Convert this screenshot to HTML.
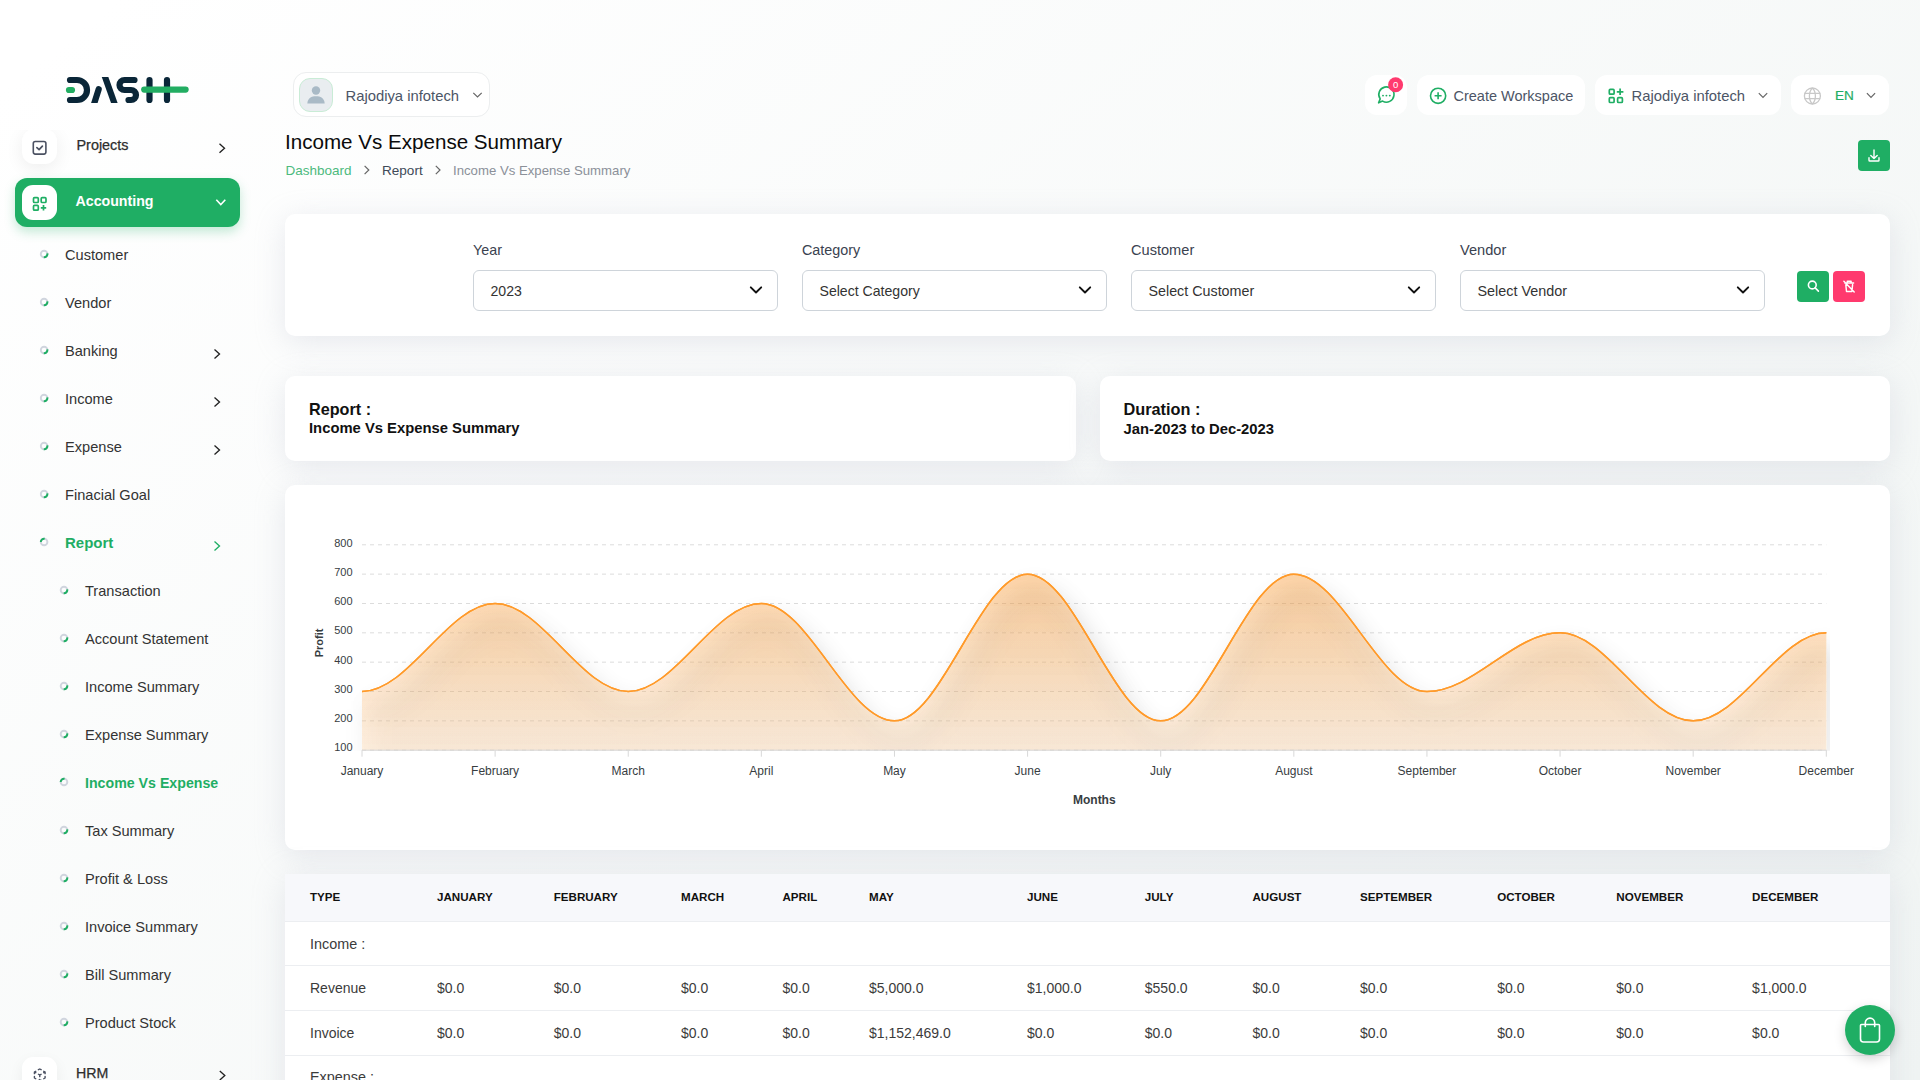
<!DOCTYPE html>
<html><head><meta charset="utf-8"><title>Income Vs Expense Summary</title>
<style>
*{box-sizing:border-box;margin:0;padding:0}
html,body{width:1920px;height:1080px;overflow:hidden}
body{position:relative;font-family:"Liberation Sans",sans-serif;color:#333;
background:linear-gradient(141.55deg,rgba(240,244,243,0) 3.46%,#f0f4f3 99.86%),#fff}
.a{position:absolute;white-space:nowrap;line-height:20px}
.card{position:absolute;background:#fff;border-radius:10px;box-shadow:0 6px 30px rgba(182,186,203,.3)}
.hb{position:absolute;top:75px;height:40px;background:#fff;border-radius:12px}
svg{position:absolute;overflow:visible}
#menu{position:absolute;left:0;top:130px;width:275px;height:950px;overflow:hidden}
.ib{position:absolute;width:35px;height:35px;border-radius:11px;background:#fff;box-shadow:0 5px 15px rgba(0,0,0,.06)}
</style></head>
<body>

<svg style="left:0;top:0" width="200" height="120" viewBox="0 0 200 120"><defs><clipPath id="lgc"><rect x="85" y="76.9" width="40" height="26"/></clipPath></defs>
 <g fill="none" stroke="#0a2638" stroke-width="6.2" stroke-linecap="round" stroke-linejoin="round">
  <path d="M70 80H77A10 10 0 0 1 77 100H70"/>
  <g clip-path="url(#lgc)" stroke-linecap="butt"><path d="M93.4 106L98.7 89.2" stroke-linecap="round"/><path d="M104 74L115.4 106"/></g>
  <path d="M134.5 80H124.5A5 5 0 0 0 124.5 90H131A5 5 0 0 1 131 100H128.5"/>
  <path d="M149.5 80V100M167 80V100"/>
 </g>
 <g fill="none" stroke="#22ad62" stroke-width="6.2" stroke-linecap="round">
  <path d="M69 90H72"/><path d="M144.2 89.6H185.6"/>
 </g>
</svg>

<div id="menu">
<div class="ib" style="left:22px;top:-1.3000000000000114px;border-radius:12px;box-shadow:0 4px 18px rgba(0,0,0,.07)"></div>
<div style="position:absolute;left:15px;top:48px;width:225px;height:49px;border-radius:12px;background:#1fae64;box-shadow:0 5px 11px rgba(31,174,100,.26)"></div>
<div class="ib" style="left:22px;top:55px;box-shadow:none"></div>
<div class="ib" style="left:22px;top:927px"></div>
<div class="a" style="left:76.5px;top:4.91px;font-size:14.4px;font-weight:400;color:#2d2d2d;-webkit-text-stroke:.25px #2d2d2d">Projects</div>
<div class="a" style="left:75.5px;top:61.08px;font-size:14.2px;font-weight:700;color:#fff;">Accounting</div>
<div class="a" style="left:76px;top:932.58px;font-size:14.2px;font-weight:400;color:#2d2d2d;-webkit-text-stroke:.25px #2d2d2d">HRM</div>
<div class="a" style="left:65px;top:114.74px;font-size:14.6px;font-weight:400;color:#333;">Customer</div>
<div class="a" style="left:65px;top:162.74px;font-size:14.6px;font-weight:400;color:#333;">Vendor</div>
<div class="a" style="left:65px;top:210.74px;font-size:14.6px;font-weight:400;color:#333;">Banking</div>
<div class="a" style="left:65px;top:258.74px;font-size:14.6px;font-weight:400;color:#333;">Income</div>
<div class="a" style="left:65px;top:306.74px;font-size:14.6px;font-weight:400;color:#333;">Expense</div>
<div class="a" style="left:65px;top:354.74px;font-size:14.6px;font-weight:400;color:#333;">Finacial Goal</div>
<div class="a" style="left:65px;top:402.60px;font-size:15px;font-weight:700;color:#1fae64;">Report</div>
<div class="a" style="left:85px;top:450.74px;font-size:14.6px;font-weight:400;color:#333;">Transaction</div>
<div class="a" style="left:85px;top:498.74px;font-size:14.6px;font-weight:400;color:#333;">Account Statement</div>
<div class="a" style="left:85px;top:546.74px;font-size:14.6px;font-weight:400;color:#333;">Income Summary</div>
<div class="a" style="left:85px;top:594.74px;font-size:14.6px;font-weight:400;color:#333;">Expense Summary</div>
<div class="a" style="left:85px;top:642.88px;font-size:14.2px;font-weight:700;color:#1fae64;">Income Vs Expense</div>
<div class="a" style="left:85px;top:690.74px;font-size:14.6px;font-weight:400;color:#333;">Tax Summary</div>
<div class="a" style="left:85px;top:738.74px;font-size:14.6px;font-weight:400;color:#333;">Profit &amp; Loss</div>
<div class="a" style="left:85px;top:786.74px;font-size:14.6px;font-weight:400;color:#333;">Invoice Summary</div>
<div class="a" style="left:85px;top:834.74px;font-size:14.6px;font-weight:400;color:#333;">Bill Summary</div>
<div class="a" style="left:85px;top:882.74px;font-size:14.6px;font-weight:400;color:#333;">Product Stock</div>
<svg style="left:0;top:0" width="275" height="950" viewBox="0 130 275 950"><circle cx="44.1" cy="254" r="3.3" fill="none" stroke="#d0d5de" stroke-width="1.9"/><path d="M47.35 253.43A3.3 3.3 0 0 1 43.81 257.29" fill="none" stroke="#1fae64" stroke-width="2"/><circle cx="44.1" cy="302" r="3.3" fill="none" stroke="#d0d5de" stroke-width="1.9"/><path d="M47.35 301.43A3.3 3.3 0 0 1 43.81 305.29" fill="none" stroke="#1fae64" stroke-width="2"/><circle cx="44.1" cy="350" r="3.3" fill="none" stroke="#d0d5de" stroke-width="1.9"/><path d="M47.35 349.43A3.3 3.3 0 0 1 43.81 353.29" fill="none" stroke="#1fae64" stroke-width="2"/><path d="M214.5 349.5L219.5 354L214.5 358.5" fill="none" stroke="#222" stroke-width="1.35"/><circle cx="44.1" cy="398" r="3.3" fill="none" stroke="#d0d5de" stroke-width="1.9"/><path d="M47.35 397.43A3.3 3.3 0 0 1 43.81 401.29" fill="none" stroke="#1fae64" stroke-width="2"/><path d="M214.5 397.5L219.5 402L214.5 406.5" fill="none" stroke="#222" stroke-width="1.35"/><circle cx="44.1" cy="446" r="3.3" fill="none" stroke="#d0d5de" stroke-width="1.9"/><path d="M47.35 445.43A3.3 3.3 0 0 1 43.81 449.29" fill="none" stroke="#1fae64" stroke-width="2"/><path d="M214.5 445.5L219.5 450L214.5 454.5" fill="none" stroke="#222" stroke-width="1.35"/><circle cx="44.1" cy="494" r="3.3" fill="none" stroke="#d0d5de" stroke-width="1.9"/><path d="M47.35 493.43A3.3 3.3 0 0 1 43.81 497.29" fill="none" stroke="#1fae64" stroke-width="2"/><circle cx="44.1" cy="542" r="3.3" fill="none" stroke="#d0d5de" stroke-width="1.9"/><path d="M40.80 542.00A3.3 3.3 0 0 1 44.67 538.75" fill="none" stroke="#1fae64" stroke-width="2"/><path d="M214.5 541.5L219.5 546L214.5 550.5" fill="none" stroke="#1fae64" stroke-width="1.35"/><circle cx="64" cy="590" r="3.3" fill="none" stroke="#d0d5de" stroke-width="1.9"/><path d="M67.25 589.43A3.3 3.3 0 0 1 63.71 593.29" fill="none" stroke="#1fae64" stroke-width="2"/><circle cx="64" cy="638" r="3.3" fill="none" stroke="#d0d5de" stroke-width="1.9"/><path d="M67.25 637.43A3.3 3.3 0 0 1 63.71 641.29" fill="none" stroke="#1fae64" stroke-width="2"/><circle cx="64" cy="686" r="3.3" fill="none" stroke="#d0d5de" stroke-width="1.9"/><path d="M67.25 685.43A3.3 3.3 0 0 1 63.71 689.29" fill="none" stroke="#1fae64" stroke-width="2"/><circle cx="64" cy="734" r="3.3" fill="none" stroke="#d0d5de" stroke-width="1.9"/><path d="M67.25 733.43A3.3 3.3 0 0 1 63.71 737.29" fill="none" stroke="#1fae64" stroke-width="2"/><circle cx="64" cy="782" r="3.3" fill="none" stroke="#d0d5de" stroke-width="1.9"/><path d="M60.70 782.00A3.3 3.3 0 0 1 64.57 778.75" fill="none" stroke="#1fae64" stroke-width="2"/><circle cx="64" cy="830" r="3.3" fill="none" stroke="#d0d5de" stroke-width="1.9"/><path d="M67.25 829.43A3.3 3.3 0 0 1 63.71 833.29" fill="none" stroke="#1fae64" stroke-width="2"/><circle cx="64" cy="878" r="3.3" fill="none" stroke="#d0d5de" stroke-width="1.9"/><path d="M67.25 877.43A3.3 3.3 0 0 1 63.71 881.29" fill="none" stroke="#1fae64" stroke-width="2"/><circle cx="64" cy="926" r="3.3" fill="none" stroke="#d0d5de" stroke-width="1.9"/><path d="M67.25 925.43A3.3 3.3 0 0 1 63.71 929.29" fill="none" stroke="#1fae64" stroke-width="2"/><circle cx="64" cy="974" r="3.3" fill="none" stroke="#d0d5de" stroke-width="1.9"/><path d="M67.25 973.43A3.3 3.3 0 0 1 63.71 977.29" fill="none" stroke="#1fae64" stroke-width="2"/><circle cx="64" cy="1022" r="3.3" fill="none" stroke="#d0d5de" stroke-width="1.9"/><path d="M67.25 1021.43A3.3 3.3 0 0 1 63.71 1025.29" fill="none" stroke="#1fae64" stroke-width="2"/><path d="M219.5 143.8L224.5 148.3L219.5 152.8" fill="none" stroke="#222" stroke-width="1.35"/><path d="M216.3 199.7L220.8 204.5L225.3 199.7" fill="none" stroke="#fff" stroke-width="1.6"/><path d="M219.8 1071L224.8 1075.5L219.8 1080" fill="none" stroke="#222" stroke-width="1.35"/><rect x="33.3" y="141.5" width="12.6" height="12.6" rx="2" fill="none" stroke="#4b5162" stroke-width="1.6"/><path d="M36.9 147.6L39.1 149.6L42.4 146.1" fill="none" stroke="#4b5162" stroke-width="1.7" stroke-linecap="round" stroke-linejoin="round"/><g fill="none" stroke="#1fae64" stroke-width="1.7" stroke-linejoin="round"><rect x="33.5" y="197.7" width="4.8" height="4.8" rx="1"/><rect x="41.2" y="197.7" width="4.8" height="4.8" rx="1"/><rect x="33.5" y="205.4" width="4.8" height="4.8" rx="1"/><path d="M40.8 207.8H46.2M43.5 205.1V210.5"/></g><g fill="none" stroke="#4b5162" stroke-width="2.1" stroke-linecap="round" stroke-linejoin="round" transform="translate(31.75 1067) scale(.667)"><path d="M6 17.6l-2 -1.1v-2.5M4 10v-2.5l2 -1.1M10 4.1l2 -1.1l2 1.1M18 6.4l2 1.1v2.5M20 14v2.5l-2 1.12M14 19.9l-2 1.1l-2 -1.1M12 12l2 -1.1M18 8.6l2 -1.1M12 12v2.5M12 18.5v2.5M12 12l-2 -1.12M6 8.6l-2 -1.1"/></g></svg>
</div>

<div class="hb" style="left:293px;top:72px;width:197px;height:45px;border:1px solid #eceeef;border-radius:13px"></div>
<div class="hb" style="left:1365px;width:42px"></div>
<div class="hb" style="left:1417px;width:168px"></div>
<div class="hb" style="left:1595px;width:186px"></div>
<div class="hb" style="left:1791px;width:98px"></div>
<div class="a" style="left:345.5px;top:85.57px;font-size:14.8px;font-weight:400;color:#4c5566;">Rajodiya infotech</div>
<div class="a" style="left:1453.5px;top:85.73px;font-size:14.5px;font-weight:400;color:#4c5566;">Create Workspace</div>
<div class="a" style="left:1631.5px;top:85.62px;font-size:14.8px;font-weight:400;color:#4c5566;">Rajodiya infotech</div>
<div class="a" style="left:1835px;top:86.19px;font-size:13.6px;font-weight:400;color:#1fae64;-webkit-text-stroke:.2px #1fae64">EN</div>
<div style="position:absolute;left:299px;top:78px;width:34px;height:34px;border-radius:11px;background:#e9edf0;border:1px solid #c9ecd6"></div>
<svg style="left:0;top:0" width="1920" height="200" viewBox="0 0 1920 200"><circle cx="316" cy="90.5" r="4.2" fill="#a9bac6"/><path d="M307.3 103.5C307.8 98 311.5 96.3 316 96.3S324.2 98 324.7 103.5Z" fill="#a9bac6"/><path d="M473.3 92.8L477.5 97L481.7 92.8" fill="none" stroke="#666" stroke-width="1.2"/><path d="M1378.6 102.8L1380.2 98.9A7.6 7.6 0 1 1 1382.6 101.1Z" fill="none" stroke="#1fae64" stroke-width="1.6" stroke-linejoin="round"/><g fill="#1fae64"><circle cx="1383" cy="95.6" r=".95"/><circle cx="1386.4" cy="95.6" r=".95"/><circle cx="1389.8" cy="95.6" r=".95"/></g><circle cx="1395.6" cy="84.8" r="7.5" fill="#ff3a6e"/><circle cx="1438.1" cy="95.8" r="7.6" fill="none" stroke="#1fae64" stroke-width="1.6"/><path d="M1438.1 92.3V99.3M1434.6 95.8H1441.6" stroke="#1fae64" stroke-width="1.6"/><g fill="none" stroke="#1fae64" stroke-width="1.7" stroke-linejoin="round"><rect x="1609.3" y="89.4" width="4.8" height="4.8" rx="1"/><rect x="1609.3" y="97.7" width="4.8" height="4.8" rx="1"/><rect x="1617.6" y="97.7" width="4.8" height="4.8" rx="1"/><path d="M1616.8 91.8H1623.4M1620.1 88.5V95.1"/></g><path d="M1758.8 93.1L1763 97.3L1767.2 93.1" fill="none" stroke="#666" stroke-width="1.2"/><path d="M1866.9 93.1L1871 97.3L1875.1 93.1" fill="none" stroke="#666" stroke-width="1.2"/><g fill="none" stroke="#c8c8c8" stroke-width="1.3"><circle cx="1812.4" cy="96" r="8"/><path d="M1804.6 93.3H1820.2M1804.6 98.7H1820.2M1812.4 88C1808.4 92 1808.4 100 1812.4 104M1812.4 88C1816.4 92 1816.4 100 1812.4 104"/></g><rect x="1858" y="140" width="32" height="31" rx="4" fill="#1fae64"/><g fill="none" stroke="#fff" stroke-width="1.4" stroke-linecap="round" stroke-linejoin="round"><path d="M1874 150V158.5M1870.8 155.5L1874 158.5L1877.2 155.5M1869 157.8V160.2A.8 .8 0 0 0 1869.8 161H1878.2A.8 .8 0 0 0 1879 160.2V157.8"/></g></svg>
<div class="a" style="left:1391.6px;top:79.2px;width:8px;text-align:center;font-size:9.5px;line-height:11px;color:#fff">0</div>
<div class="a" style="left:285px;top:132.26px;font-size:20.6px;font-weight:400;color:#0b0b0b;">Income Vs Expense Summary</div>
<div class="a" style="left:285.5px;top:161.02px;font-size:13.5px;font-weight:400;color:#4cba7d;">Dashboard</div>
<div class="a" style="left:382px;top:161.00px;font-size:13.55px;font-weight:400;color:#404a58;">Report</div>
<div class="a" style="left:453px;top:161.13px;font-size:13.2px;font-weight:400;color:#8b9099;">Income Vs Expense Summary</div>
<svg style="left:0;top:0" width="700" height="200" viewBox="0 0 700 200"><path d="M364.6 165.8L368.8 170L364.6 174.2M435.8 165.8L440 170L435.8 174.2" fill="none" stroke="#666" stroke-width="1.2"/></svg>
<div class="card" style="left:285px;top:214px;width:1605px;height:122px"></div>
<div class="a" style="left:473px;top:240.15px;font-size:14.3px;font-weight:400;color:#3a4250;">Year</div>
<div style="position:absolute;left:473px;top:270px;width:305px;height:41px;border:1px solid #ced4da;border-radius:6px;background:#fff"></div>
<div class="a" style="left:490.5px;top:281.11px;font-size:14.1px;font-weight:400;color:#333;">2023</div>
<div class="a" style="left:802px;top:240.13px;font-size:14.35px;font-weight:400;color:#3a4250;">Category</div>
<div style="position:absolute;left:802px;top:270px;width:305px;height:41px;border:1px solid #ced4da;border-radius:6px;background:#fff"></div>
<div class="a" style="left:819.5px;top:281.11px;font-size:14.1px;font-weight:400;color:#333;">Select Category</div>
<div class="a" style="left:1131px;top:240.04px;font-size:14.6px;font-weight:400;color:#3a4250;">Customer</div>
<div style="position:absolute;left:1131px;top:270px;width:305px;height:41px;border:1px solid #ced4da;border-radius:6px;background:#fff"></div>
<div class="a" style="left:1148.5px;top:281.05px;font-size:14.3px;font-weight:400;color:#333;">Select Customer</div>
<div class="a" style="left:1460px;top:240.04px;font-size:14.6px;font-weight:400;color:#3a4250;">Vendor</div>
<div style="position:absolute;left:1460px;top:270px;width:305px;height:41px;border:1px solid #ced4da;border-radius:6px;background:#fff"></div>
<div class="a" style="left:1477.5px;top:281.01px;font-size:14.4px;font-weight:400;color:#333;">Select Vendor</div>
<svg style="left:0;top:0" width="1920" height="400" viewBox="0 0 1920 400"><path d="M750.8 287.3L756 292.5L761.2 287.3" fill="none" stroke="#111" stroke-width="1.9" stroke-linecap="round" stroke-linejoin="round"/><path d="M1079.8 287.3L1085 292.5L1090.2 287.3" fill="none" stroke="#111" stroke-width="1.9" stroke-linecap="round" stroke-linejoin="round"/><path d="M1408.8 287.3L1414 292.5L1419.2 287.3" fill="none" stroke="#111" stroke-width="1.9" stroke-linecap="round" stroke-linejoin="round"/><path d="M1737.8 287.3L1743 292.5L1748.2 287.3" fill="none" stroke="#111" stroke-width="1.9" stroke-linecap="round" stroke-linejoin="round"/><rect x="1797" y="271" width="32" height="31" rx="4" fill="#1fae64"/><rect x="1833" y="271" width="32" height="31" rx="4" fill="#ff3a6e"/><g fill="none" stroke="#fff" stroke-width="1.6" stroke-linecap="round"><circle cx="1812.3" cy="285" r="3.9"/><path d="M1815.2 287.9L1818.4 291.1"/></g><g fill="none" stroke="#fff" stroke-width="1.45" stroke-linecap="round" stroke-linejoin="round"><path d="M1844.8 283H1853.6M1847.3 283V281.2H1851.1V283M1845.8 284.6L1846.5 291.5H1851.9L1852.6 284.6M1843.9 281.3L1854.2 292"/></g></svg>
<div class="card" style="left:285px;top:376px;width:791px;height:85px"></div>
<div class="card" style="left:1100px;top:376px;width:790px;height:85px"></div>
<div class="a" style="left:309px;top:399.09px;font-size:16.2px;font-weight:700;color:#111;">Report :</div>
<div class="a" style="left:309px;top:418.47px;font-size:14.8px;font-weight:700;color:#111;">Income Vs Expense Summary</div>
<div class="a" style="left:1123.5px;top:398.75px;font-size:16.3px;font-weight:700;color:#111;">Duration :</div>
<div class="a" style="left:1123.5px;top:418.87px;font-size:14.8px;font-weight:700;color:#111;">Jan-2023 to Dec-2023</div>
<div class="card" style="left:285px;top:485px;width:1605px;height:365px"></div>
<svg style="left:0;top:0" width="1920" height="1080" viewBox="0 0 1920 1080"><defs><linearGradient id="fg" gradientUnits="userSpaceOnUse" x1="0" y1="574.3" x2="0" y2="750.2"><stop offset="0" stop-color="#ff9a30" stop-opacity="0.24"/><stop offset="1" stop-color="#ffcd98" stop-opacity="0.16"/></linearGradient><filter id="sh" filterUnits="userSpaceOnUse" x="300" y="480" width="1600" height="340"><feFlood flood-color="#000" flood-opacity="0.55"/><feComposite in2="SourceAlpha" operator="in"/><feOffset dx="7" dy="18"/><feGaussianBlur stdDeviation="12"/><feMerge result="m"><feMergeNode/><feMergeNode in="SourceGraphic"/></feMerge><feBlend in="SourceGraphic" in2="m"/></filter></defs><path d="M362.0 544.80H1826.3M362.0 574.14H1826.3M362.0 603.49H1826.3M362.0 632.83H1826.3M362.0 662.17H1826.3M362.0 691.51H1826.3M362.0 720.86H1826.3M362.0 750.20H1826.3" stroke="#dcdcdc" stroke-width="1" stroke-dasharray="4 4" fill="none"/><clipPath id="cp"><rect x="340" y="520" width="1490" height="230.7"/></clipPath><g clip-path="url(#cp)"><path d="M362.00 691.51C408.59 691.51 448.53 603.49 495.12 603.49C541.71 603.49 581.64 691.51 628.24 691.51C674.83 691.51 714.76 603.49 761.35 603.49C807.95 603.49 847.88 720.86 894.47 720.86C941.06 720.86 981.00 574.14 1027.59 574.14C1074.18 574.14 1114.12 720.86 1160.71 720.86C1207.30 720.86 1247.24 574.14 1293.83 574.14C1340.42 574.14 1380.35 691.51 1426.95 691.51C1473.54 691.51 1513.47 632.83 1560.06 632.83C1606.65 632.83 1646.59 720.86 1693.18 720.86C1739.77 720.86 1779.71 632.83 1826.30 632.83L1826.30 750.20L362.00 750.20Z" fill="url(#fg)" filter="url(#sh)"/><path d="M362.00 691.51C408.59 691.51 448.53 603.49 495.12 603.49C541.71 603.49 581.64 691.51 628.24 691.51C674.83 691.51 714.76 603.49 761.35 603.49C807.95 603.49 847.88 720.86 894.47 720.86C941.06 720.86 981.00 574.14 1027.59 574.14C1074.18 574.14 1114.12 720.86 1160.71 720.86C1207.30 720.86 1247.24 574.14 1293.83 574.14C1340.42 574.14 1380.35 691.51 1426.95 691.51C1473.54 691.51 1513.47 632.83 1560.06 632.83C1606.65 632.83 1646.59 720.86 1693.18 720.86C1739.77 720.86 1779.71 632.83 1826.30 632.83" fill="none" stroke="#ff9a2a" stroke-width="1.5" filter="url(#sh)"/></g><path d="M362.0 750.2H1826.3M362.00 750.20V756.70M495.12 750.20V756.70M628.24 750.20V756.70M761.35 750.20V756.70M894.47 750.20V756.70M1027.59 750.20V756.70M1160.71 750.20V756.70M1293.83 750.20V756.70M1426.95 750.20V756.70M1560.06 750.20V756.70M1693.18 750.20V756.70M1826.30 750.20V756.70" stroke="#d8d8d8" stroke-width="1" fill="none"/><text x="352.5" y="547.15" text-anchor="end" font-size="11" fill="#373d3f" font-family="Liberation Sans">800</text><text x="352.5" y="576.24" text-anchor="end" font-size="11" fill="#373d3f" font-family="Liberation Sans">700</text><text x="352.5" y="605.33" text-anchor="end" font-size="11" fill="#373d3f" font-family="Liberation Sans">600</text><text x="352.5" y="634.42" text-anchor="end" font-size="11" fill="#373d3f" font-family="Liberation Sans">500</text><text x="352.5" y="663.51" text-anchor="end" font-size="11" fill="#373d3f" font-family="Liberation Sans">400</text><text x="352.5" y="692.60" text-anchor="end" font-size="11" fill="#373d3f" font-family="Liberation Sans">300</text><text x="352.5" y="721.69" text-anchor="end" font-size="11" fill="#373d3f" font-family="Liberation Sans">200</text><text x="352.5" y="750.78" text-anchor="end" font-size="11" fill="#373d3f" font-family="Liberation Sans">100</text><text x="362.00" y="775.2" text-anchor="middle" font-size="12" fill="#373d3f" font-family="Liberation Sans">January</text><text x="495.12" y="775.2" text-anchor="middle" font-size="12" fill="#373d3f" font-family="Liberation Sans">February</text><text x="628.24" y="775.2" text-anchor="middle" font-size="12" fill="#373d3f" font-family="Liberation Sans">March</text><text x="761.35" y="775.2" text-anchor="middle" font-size="12" fill="#373d3f" font-family="Liberation Sans">April</text><text x="894.47" y="775.2" text-anchor="middle" font-size="12" fill="#373d3f" font-family="Liberation Sans">May</text><text x="1027.59" y="775.2" text-anchor="middle" font-size="12" fill="#373d3f" font-family="Liberation Sans">June</text><text x="1160.71" y="775.2" text-anchor="middle" font-size="12" fill="#373d3f" font-family="Liberation Sans">July</text><text x="1293.83" y="775.2" text-anchor="middle" font-size="12" fill="#373d3f" font-family="Liberation Sans">August</text><text x="1426.95" y="775.2" text-anchor="middle" font-size="12" fill="#373d3f" font-family="Liberation Sans">September</text><text x="1560.06" y="775.2" text-anchor="middle" font-size="12" fill="#373d3f" font-family="Liberation Sans">October</text><text x="1693.18" y="775.2" text-anchor="middle" font-size="12" fill="#373d3f" font-family="Liberation Sans">November</text><text x="1826.30" y="775.2" text-anchor="middle" font-size="12" fill="#373d3f" font-family="Liberation Sans">December</text><text x="1094.3" y="803.8" text-anchor="middle" font-size="12" font-weight="700" fill="#373d3f" font-family="Liberation Sans">Months</text><text transform="translate(323 642.9) rotate(-90)" text-anchor="middle" font-size="11" font-weight="700" fill="#373d3f" font-family="Liberation Sans">Profit</text></svg>
<div class="card" style="left:285px;top:874px;width:1605px;height:260px;border-radius:0"></div>
<div style="position:absolute;left:285px;top:874px;width:1605px;height:47.5px;background:#f7f8fb;border-bottom:1px solid #eceef1"></div>
<div style="position:absolute;left:285px;top:965px;width:1605px;height:1px;background:#eceef1"></div>
<div style="position:absolute;left:285px;top:1010px;width:1605px;height:1px;background:#eceef1"></div>
<div style="position:absolute;left:285px;top:1054.5px;width:1605px;height:1px;background:#eceef1"></div>
<div class="a" style="left:310px;top:886.68px;font-size:11.6px;font-weight:700;color:#111;">TYPE</div>
<div class="a" style="left:437px;top:886.68px;font-size:11.6px;font-weight:700;color:#111;">JANUARY</div>
<div class="a" style="left:553.7px;top:886.68px;font-size:11.6px;font-weight:700;color:#111;">FEBRUARY</div>
<div class="a" style="left:681px;top:886.68px;font-size:11.6px;font-weight:700;color:#111;">MARCH</div>
<div class="a" style="left:782.5px;top:886.68px;font-size:11.6px;font-weight:700;color:#111;">APRIL</div>
<div class="a" style="left:869px;top:886.68px;font-size:11.6px;font-weight:700;color:#111;">MAY</div>
<div class="a" style="left:1027px;top:886.68px;font-size:11.6px;font-weight:700;color:#111;">JUNE</div>
<div class="a" style="left:1144.8px;top:886.68px;font-size:11.6px;font-weight:700;color:#111;">JULY</div>
<div class="a" style="left:1252.5px;top:886.68px;font-size:11.6px;font-weight:700;color:#111;">AUGUST</div>
<div class="a" style="left:1360px;top:886.68px;font-size:11.6px;font-weight:700;color:#111;">SEPTEMBER</div>
<div class="a" style="left:1497.2px;top:886.68px;font-size:11.6px;font-weight:700;color:#111;">OCTOBER</div>
<div class="a" style="left:1616.3px;top:886.68px;font-size:11.6px;font-weight:700;color:#111;">NOVEMBER</div>
<div class="a" style="left:1752.1px;top:886.68px;font-size:11.6px;font-weight:700;color:#111;">DECEMBER</div>
<div class="a" style="left:310px;top:934.01px;font-size:14.4px;font-weight:400;color:#3b3b3b;">Income :</div>
<div class="a" style="left:310px;top:977.65px;font-size:14px;font-weight:400;color:#3b3b3b;">Revenue</div>
<div class="a" style="left:437px;top:977.65px;font-size:14px;font-weight:400;color:#3b3b3b;">$0.0</div>
<div class="a" style="left:553.7px;top:977.65px;font-size:14px;font-weight:400;color:#3b3b3b;">$0.0</div>
<div class="a" style="left:681px;top:977.65px;font-size:14px;font-weight:400;color:#3b3b3b;">$0.0</div>
<div class="a" style="left:782.5px;top:977.65px;font-size:14px;font-weight:400;color:#3b3b3b;">$0.0</div>
<div class="a" style="left:869px;top:977.65px;font-size:14px;font-weight:400;color:#3b3b3b;">$5,000.0</div>
<div class="a" style="left:1027px;top:977.65px;font-size:14px;font-weight:400;color:#3b3b3b;">$1,000.0</div>
<div class="a" style="left:1144.8px;top:977.65px;font-size:14px;font-weight:400;color:#3b3b3b;">$550.0</div>
<div class="a" style="left:1252.5px;top:977.65px;font-size:14px;font-weight:400;color:#3b3b3b;">$0.0</div>
<div class="a" style="left:1360px;top:977.65px;font-size:14px;font-weight:400;color:#3b3b3b;">$0.0</div>
<div class="a" style="left:1497.2px;top:977.65px;font-size:14px;font-weight:400;color:#3b3b3b;">$0.0</div>
<div class="a" style="left:1616.3px;top:977.65px;font-size:14px;font-weight:400;color:#3b3b3b;">$0.0</div>
<div class="a" style="left:1752.1px;top:977.65px;font-size:14px;font-weight:400;color:#3b3b3b;">$1,000.0</div>
<div class="a" style="left:310px;top:1022.75px;font-size:14px;font-weight:400;color:#3b3b3b;">Invoice</div>
<div class="a" style="left:437px;top:1022.75px;font-size:14px;font-weight:400;color:#3b3b3b;">$0.0</div>
<div class="a" style="left:553.7px;top:1022.75px;font-size:14px;font-weight:400;color:#3b3b3b;">$0.0</div>
<div class="a" style="left:681px;top:1022.75px;font-size:14px;font-weight:400;color:#3b3b3b;">$0.0</div>
<div class="a" style="left:782.5px;top:1022.75px;font-size:14px;font-weight:400;color:#3b3b3b;">$0.0</div>
<div class="a" style="left:869px;top:1022.75px;font-size:14px;font-weight:400;color:#3b3b3b;">$1,152,469.0</div>
<div class="a" style="left:1027px;top:1022.75px;font-size:14px;font-weight:400;color:#3b3b3b;">$0.0</div>
<div class="a" style="left:1144.8px;top:1022.75px;font-size:14px;font-weight:400;color:#3b3b3b;">$0.0</div>
<div class="a" style="left:1252.5px;top:1022.75px;font-size:14px;font-weight:400;color:#3b3b3b;">$0.0</div>
<div class="a" style="left:1360px;top:1022.75px;font-size:14px;font-weight:400;color:#3b3b3b;">$0.0</div>
<div class="a" style="left:1497.2px;top:1022.75px;font-size:14px;font-weight:400;color:#3b3b3b;">$0.0</div>
<div class="a" style="left:1616.3px;top:1022.75px;font-size:14px;font-weight:400;color:#3b3b3b;">$0.0</div>
<div class="a" style="left:1752.1px;top:1022.75px;font-size:14px;font-weight:400;color:#3b3b3b;">$0.0</div>
<div class="a" style="left:310px;top:1067.01px;font-size:14.4px;font-weight:400;color:#3b3b3b;">Expense :</div>
<div style="position:absolute;left:1845px;top:1005px;width:50px;height:50px;border-radius:50%;background:#1fae64;box-shadow:0 4px 12px rgba(0,0,0,.18)"></div>
<svg style="left:0;top:0" width="1920" height="1080" viewBox="0 0 1920 1080"><g fill="none" stroke="#fff" stroke-width="1.6" stroke-linecap="round" stroke-linejoin="round"><path d="M1861.5 1024.5H1878.5A1 1 0 0 1 1879.5 1025.5V1039A3 3 0 0 1 1876.5 1042H1863.5A3 3 0 0 1 1860.5 1039V1025.5A1 1 0 0 1 1861.5 1024.5Z"/><path d="M1865.3 1026.5V1022.8A4.7 4.7 0 0 1 1874.7 1022.8V1026.5"/></g></svg>
</body></html>
